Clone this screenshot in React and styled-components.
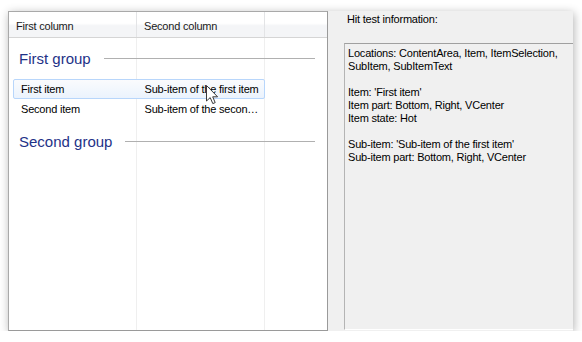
import React from "react";
import styled, { createGlobalStyle } from "styled-components";

const GlobalStyle = createGlobalStyle`
  html, body {
    margin: 0;
    padding: 0;
    background: #ffffff;
  }
  body {
    font-family: "Liberation Sans", Arial, sans-serif;
    font-size: 11px;
    color: #000;
  }
`;

const columns = [
  { title: "First column", width: 128 },
  { title: "Second column", width: 128 },
];

const groups = [
  {
    title: "First group",
    items: [
      { text: "First item", sub: "Sub-item of the first item", hot: true },
      { text: "Second item", sub: "Sub-item of the secon\u2026" },
    ],
  },
  { title: "Second group", items: [] },
];

const info = [
  "Locations: ContentArea, Item, ItemSelection,",
  "SubItem, SubItemText",
  "",
  "Item: 'First item'",
  "Item part: Bottom, Right, VCenter",
  "Item state: Hot",
  "",
  "Sub-item: 'Sub-item of the first item'",
  "Sub-item part: Bottom, Right, VCenter",
];

export default function App() {
  return (
    <>
      <GlobalStyle />
      <Window>
        <ListView>
          <Header>
            {columns.map((c) => (
              <HeaderCell key={c.title} $width={c.width}>
                {c.title}
              </HeaderCell>
            ))}
            <HeaderCell $last />
          </Header>
          <Body>
            {groups.map((g, i) => (
              <Group key={g.title} $first={i === 0}>
                <GroupHeader>
                  <GroupTitle>{g.title}</GroupTitle>
                  <GroupLine />
                </GroupHeader>
                {g.items.map((it) => (
                  <Row key={it.text} $hot={it.hot}>
                    <Cell $width={123} $pad={7}>{it.text}</Cell>
                    <Cell $width={128} $pad={8}>{it.sub}</Cell>
                  </Row>
                ))}
              </Group>
            ))}
            <Cursor viewBox="0 0 13 20" width="13" height="20">
              <path
                d="M0.5 0.5 L0.5 16 L4.2 12.6 L6.8 18.6 L9.2 17.6 L6.7 11.8 L11.6 11.8 Z"
                fill="#ffffff"
                stroke="#3a3a3a"
                strokeWidth="1"
                strokeLinejoin="round"
              />
            </Cursor>
          </Body>
        </ListView>
        <SidePanel>
          <Caption>Hit test information:</Caption>
          <InfoBox>
            {info.map((line, i) => (
              <InfoLine key={i}>{line || "\u00a0"}</InfoLine>
            ))}
          </InfoBox>
        </SidePanel>
      </Window>
    </>
  );
}

const Window = styled.div`
  margin: 11px 0 0 8px;
  width: 565px;
  height: 320px;
  display: flex;
  background: #f0f0f0;
  box-shadow: 1px 2px 9px rgba(0, 0, 0, 0.3);
`;

const ListView = styled.div`
  width: 320px;
  box-sizing: border-box;
  border: 1px solid #a9a9a9;
  border-bottom-color: #9a9a9a;
  border-right-color: #9a9a9a;
  background: #ffffff;
  display: flex;
  flex-direction: column;
  font-family: "Liberation Sans", Arial, sans-serif;
  font-size: 11px;
  letter-spacing: -0.2px;
`;

const Header = styled.div`
  display: flex;
  height: 25px;
  border-bottom: 1px solid #d5d5d5;
  background: linear-gradient(#ffffff 0%, #ffffff 45%, #f4f5f7 55%, #f4f5f7 100%);
`;

const HeaderCell = styled.div`
  ${(p) => (p.$last ? "flex: 1;" : `width: ${p.$width}px;`)}
  box-sizing: border-box;
  border-right: ${(p) => (p.$last ? "none" : "1px solid #e3e4e6")};
  padding: 2px 0 0 7px;
  display: flex;
  align-items: center;
  color: #1a1a1a;
  white-space: nowrap;
`;

const Body = styled.div`
  flex: 1;
  position: relative;
  background: linear-gradient(
    to right,
    transparent 127px,
    #efefef 127px,
    #efefef 128px,
    transparent 128px,
    transparent 255px,
    #efefef 255px,
    #efefef 256px,
    transparent 256px
  );
`;

const Group = styled.div`
  margin-top: ${(p) => (p.$first ? 8 : 10)}px;
  display: flex;
  flex-direction: column;
`;

const GroupHeader = styled.div`
  height: 24px;
  display: flex;
  align-items: center;
  padding: 0 12px 0 10px;
  margin-bottom: 9px;
`;

const GroupTitle = styled.span`
  font-family: "Liberation Sans", Arial, sans-serif;
  font-size: 15px;
  letter-spacing: 0;
  color: #1e3287;
  white-space: nowrap;
`;

const GroupLine = styled.div`
  flex: 1;
  height: 1px;
  margin-left: 13px;
  background: #b0b0b0;
`;

const Row = styled.div`
  display: flex;
  align-items: center;
  height: 20px;
  width: 252px;
  margin-left: 4px;
  box-sizing: border-box;
  border: 1px solid ${(p) => (p.$hot ? "#b8d6fb" : "transparent")};
  border-radius: 2px;
  background: ${(p) =>
    p.$hot ? "linear-gradient(#fafbfd, #ebf3fd)" : "transparent"};
`;

const Cell = styled.div`
  width: ${(p) => p.$width}px;
  box-sizing: border-box;
  padding-left: ${(p) => p.$pad}px;
  white-space: nowrap;
  color: #000;
`;

const Cursor = styled.svg`
  position: absolute;
  left: 197px;
  top: 47px;
`;

const SidePanel = styled.div`
  flex: 1;
  display: flex;
  flex-direction: column;
  padding: 0 0 1px 16px;
  font-family: "Liberation Sans", Arial, sans-serif;
  font-size: 11px;
  letter-spacing: -0.2px;
`;

const Caption = styled.div`
  height: 32px;
  padding: 2px 0 0 3px;
  box-sizing: border-box;
  line-height: 13px;
`;

const InfoBox = styled.div`
  flex: 1;
  box-sizing: border-box;
  border-top: 1px solid #a0a0a0;
  border-left: 1px solid #b4b4b4;
  border-bottom: 1px solid #ffffff;
  padding: 3px 0 0 3px;
  background: #f0f0f0;
`;

const InfoLine = styled.div`
  line-height: 13px;
  white-space: nowrap;
`;
